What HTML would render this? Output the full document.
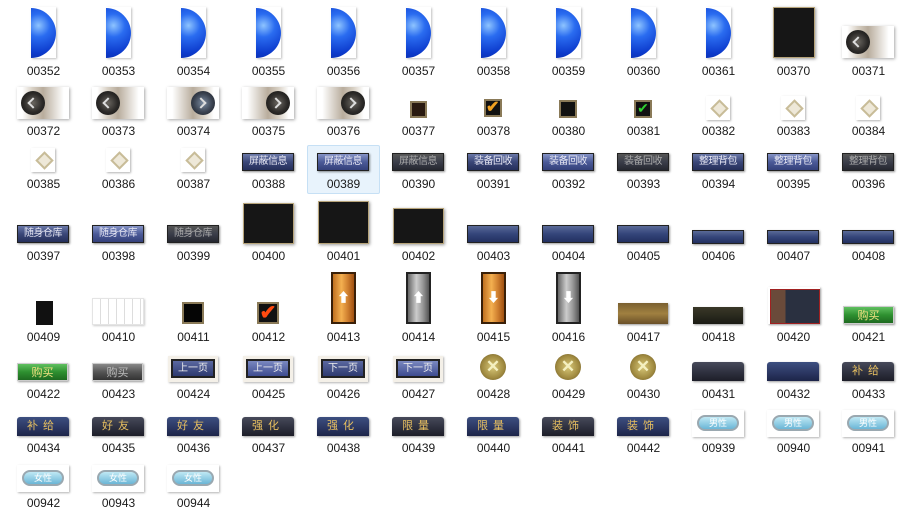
<!DOCTYPE html>
<html><head><meta charset="utf-8"><style>
body{margin:0;width:904px;height:514px;background:#fff;position:relative;overflow:hidden;font-family:"Liberation Sans","Noto Sans CJK SC",sans-serif}
.l{position:absolute;width:75px;text-align:center;font-size:12px;color:#1a1a1a;line-height:14px}
.i{position:absolute;box-sizing:border-box}
.sh{box-shadow:1px 1px 2px rgba(0,0,0,.4)}
.orb{width:25px;height:51px;top:7px;background:#fff;overflow:hidden;box-shadow:1px 1px 2px rgba(0,0,0,.25)}
.orb:before{content:"";position:absolute;left:-25px;top:1px;width:50px;height:50px;border-radius:50%;background:radial-gradient(circle at 65% 35%,#8ec4ff 0,#2a6cf0 25%,#0c3acc 60%,#061f86 100%)}
.th{width:52px;height:32px;background:#fff;box-shadow:1px 1px 3px rgba(0,0,0,.35)}
.th.sl{background:linear-gradient(90deg,#fff 10%,#d8d0c4 30%,#b8ac9c 50%,#fff 90%)}
.th.sr{background:linear-gradient(90deg,#fff 10%,#b8ac9c 50%,#d8d0c4 70%,#fff 90%)}
.ring{position:absolute;width:24px;height:24px;border-radius:50%;top:4px;background:radial-gradient(circle,#6a6660 0,#2c2a28 55%,#111 100%)}
.ring:after{content:"";position:absolute;left:8px;top:8px;width:6px;height:6px;border-left:2px solid #ddd;border-bottom:2px solid #ddd;transform:rotate(45deg)}
.ring.r:after{transform:rotate(-135deg);left:6px}
.btn{width:52px;height:18px;border:1px solid #222;background:linear-gradient(#6a78a8,#3a4678 50%,#252f5a);color:#e8e8f4;font-size:10px;line-height:16px;text-align:center;box-shadow:1px 1px 2px rgba(0,0,0,.45);letter-spacing:-0.5px}
.btn.b2{background:linear-gradient(#8593c6,#4b5a98 50%,#34407a)}
.btn.g{background:linear-gradient(#555,#3a3d4a 50%,#25272f);color:#aaa}
.bar{width:52px;height:18px;border:1px solid #222;background:linear-gradient(#5a6a98,#34457a 50%,#223060);box-shadow:1px 1px 2px rgba(0,0,0,.4)}
.frm{background:#161616;border:2px solid #b7a47a;box-shadow:1px 1px 3px rgba(0,0,0,.4)}
.dia{width:24px;height:24px;background:#fff;box-shadow:1px 1px 2px rgba(0,0,0,.3)}
.dia:after{content:"";position:absolute;left:7px;top:6px;width:9px;height:9px;border:2px solid #c8bc98;transform:rotate(45deg);background:#eee8d8}
.gb{width:52px;height:19px;border-radius:3px 3px 0 0;background:linear-gradient(#3d4f80,#2a3560 60%,#1c2448);color:#e8c060;font-size:11px;line-height:19px;text-align:center;letter-spacing:5px;box-shadow:1px 1px 2px rgba(0,0,0,.4)}
.gb.d{background:linear-gradient(#474a5a,#2c2e3c 60%,#1d1e28)}
.hex{width:52px;height:27px;background:#fff;box-shadow:1px 1px 2px rgba(0,0,0,.3)}
.hex:after{content:attr(data-t);position:absolute;left:5px;top:5px;width:42px;height:16px;border-radius:8px;background:linear-gradient(#bfe8f4,#6ab6d6);border:2px solid #9aa8b0;color:#fff;font-size:9px;line-height:13px;text-align:center;box-sizing:border-box}
.x{width:28px;height:28px;background:#fff}
.x:before{content:"";position:absolute;left:1px;top:1px;width:26px;height:26px;border-radius:50%;background:radial-gradient(circle,#d8c878,#a08a40 60%,#5a4a20)}
.x:after{content:"✕";position:absolute;left:0;top:0;width:28px;line-height:28px;text-align:center;color:#f4f0c0;font-size:17px;font-weight:bold}
.pg{width:50px;height:26px;background:#f4f0e8;box-shadow:1px 1px 2px rgba(0,0,0,.3)}
.pg span{position:absolute;left:3px;top:3px;width:44px;height:19px;border:2px solid #222;background:linear-gradient(#5a68a0,#2e3a70);color:#eee;font-size:10px;line-height:15px;text-align:center;box-sizing:border-box}
.cb{border:2px solid #8a7a58;background:#111}
</style></head><body>
<div class="i orb" style="left:31px"></div><div class="i orb" style="left:106px"></div><div class="i orb" style="left:181px"></div><div class="i orb" style="left:256px"></div><div class="i orb" style="left:331px"></div><div class="i orb" style="left:406px"></div><div class="i orb" style="left:481px"></div><div class="i orb" style="left:556px"></div><div class="i orb" style="left:631px"></div><div class="i orb" style="left:706px"></div>
<div class="i frm" style="left:773px;top:7px;width:42px;height:51px;border-width:1px"></div>
<div class="i th sl" style="left:842px;top:26px"><div class="ring" style="left:4px"></div></div>
<div class="l" style="left:6px;top:64px">00352</div><div class="l" style="left:81px;top:64px">00353</div><div class="l" style="left:156px;top:64px">00354</div><div class="l" style="left:231px;top:64px">00355</div><div class="l" style="left:306px;top:64px">00356</div><div class="l" style="left:381px;top:64px">00357</div><div class="l" style="left:456px;top:64px">00358</div><div class="l" style="left:531px;top:64px">00359</div><div class="l" style="left:606px;top:64px">00360</div><div class="l" style="left:681px;top:64px">00361</div><div class="l" style="left:756px;top:64px">00370</div><div class="l" style="left:831px;top:64px">00371</div>
<div class="i th sl" style="left:17px;top:87px"><div class="ring" style="left:4px"></div></div>
<div class="i th sl" style="left:92px;top:87px"><div class="ring" style="left:4px"></div></div>
<div class="i th sr" style="left:167px;top:87px"><div class="ring r" style="left:24px;background:radial-gradient(circle,#7a8aa0,#3a4250 55%,#15181e)"></div></div>
<div class="i th sr" style="left:242px;top:87px"><div class="ring r" style="left:24px"></div></div>
<div class="i th sr" style="left:317px;top:87px"><div class="ring r" style="left:24px"></div></div>
<div class="i cb" style="left:410px;top:101px;width:17px;height:17px;background:#2a1a10"></div>
<div class="i cb" style="left:484px;top:99px;width:18px;height:18px;color:#f0a020;font-size:16px;line-height:13px;font-weight:bold">✔</div>
<div class="i cb" style="left:559px;top:100px;width:18px;height:18px"></div>
<div class="i cb" style="left:634px;top:100px;width:18px;height:18px;color:#30d030;font-size:14px;line-height:13px;text-align:center">✔</div>
<div class="i dia" style="left:706px;top:96px"></div><div class="i dia" style="left:781px;top:96px"></div><div class="i dia" style="left:856px;top:96px"></div>
<div class="l" style="left:6px;top:124px">00372</div><div class="l" style="left:81px;top:124px">00373</div><div class="l" style="left:156px;top:124px">00374</div><div class="l" style="left:231px;top:124px">00375</div><div class="l" style="left:306px;top:124px">00376</div><div class="l" style="left:381px;top:124px">00377</div><div class="l" style="left:456px;top:124px">00378</div><div class="l" style="left:531px;top:124px">00380</div><div class="l" style="left:606px;top:124px">00381</div><div class="l" style="left:681px;top:124px">00382</div><div class="l" style="left:756px;top:124px">00383</div><div class="l" style="left:831px;top:124px">00384</div>
<div class="i" style="left:307px;top:145px;width:73px;height:49px;background:#e8f3fc;border:1px solid #c6e0f5;border-radius:2px"></div>
<div class="i dia" style="left:31px;top:148px"></div><div class="i dia" style="left:106px;top:148px"></div><div class="i dia" style="left:181px;top:148px"></div>
<div class="i btn" style="left:242px;top:153px">屏蔽信息</div><div class="i btn b2" style="left:317px;top:153px">屏蔽信息</div><div class="i btn g" style="left:392px;top:153px">屏蔽信息</div>
<div class="i btn" style="left:467px;top:153px">装备回收</div><div class="i btn b2" style="left:542px;top:153px">装备回收</div><div class="i btn g" style="left:617px;top:153px">装备回收</div>
<div class="i btn" style="left:692px;top:153px">整理背包</div><div class="i btn b2" style="left:767px;top:153px">整理背包</div><div class="i btn g" style="left:842px;top:153px">整理背包</div>
<div class="l" style="left:6px;top:177px">00385</div><div class="l" style="left:81px;top:177px">00386</div><div class="l" style="left:156px;top:177px">00387</div><div class="l" style="left:231px;top:177px">00388</div><div class="l" style="left:306px;top:177px">00389</div><div class="l" style="left:381px;top:177px">00390</div><div class="l" style="left:456px;top:177px">00391</div><div class="l" style="left:531px;top:177px">00392</div><div class="l" style="left:606px;top:177px">00393</div><div class="l" style="left:681px;top:177px">00394</div><div class="l" style="left:756px;top:177px">00395</div><div class="l" style="left:831px;top:177px">00396</div>
<div class="i btn" style="left:17px;top:225px">随身仓库</div><div class="i btn b2" style="left:92px;top:225px">随身仓库</div><div class="i btn g" style="left:167px;top:225px">随身仓库</div>
<div class="i frm" style="left:243px;top:203px;width:51px;height:41px;border-width:1px"></div><div class="i frm" style="left:318px;top:201px;width:51px;height:43px;border-width:1px"></div><div class="i frm" style="left:393px;top:208px;width:51px;height:36px;border-width:1px"></div>
<div class="i bar" style="left:467px;top:225px"></div><div class="i bar" style="left:542px;top:225px"></div><div class="i bar" style="left:617px;top:225px"></div>
<div class="i bar" style="left:692px;top:230px;height:14px"></div><div class="i bar" style="left:767px;top:230px;height:14px"></div><div class="i bar" style="left:842px;top:230px;height:14px"></div>
<div class="l" style="left:6px;top:249px">00397</div><div class="l" style="left:81px;top:249px">00398</div><div class="l" style="left:156px;top:249px">00399</div><div class="l" style="left:231px;top:249px">00400</div><div class="l" style="left:306px;top:249px">00401</div><div class="l" style="left:381px;top:249px">00402</div><div class="l" style="left:456px;top:249px">00403</div><div class="l" style="left:531px;top:249px">00404</div><div class="l" style="left:606px;top:249px">00405</div><div class="l" style="left:681px;top:249px">00406</div><div class="l" style="left:756px;top:249px">00407</div><div class="l" style="left:831px;top:249px">00408</div>
<div class="i" style="left:36px;top:301px;width:17px;height:24px;background:#111"></div>
<div class="i" style="left:92px;top:298px;width:52px;height:27px;background:repeating-linear-gradient(90deg,#fff 0 7px,#ddd 7px 8px);border:1px solid #e4e4e4;box-shadow:1px 1px 2px rgba(0,0,0,.2)"></div>
<div class="i cb" style="left:182px;top:302px;width:22px;height:22px;background:#050505"></div>
<div class="i cb" style="left:257px;top:302px;width:22px;height:22px;color:#ff4a10;font-size:20px;line-height:18px;text-align:center;font-weight:bold">✔</div>
<div class="i" style="left:331px;top:272px;width:25px;height:52px;border:2px solid #3a2008;background:linear-gradient(90deg,#c07020,#f4b050 40%,#d08030 70%,#a05010);color:#fff;text-align:center;font-size:13px;line-height:48px">⬆</div>
<div class="i" style="left:406px;top:272px;width:25px;height:52px;border:2px solid #222;background:linear-gradient(90deg,#666,#ccc 40%,#999 70%,#555);color:#fff;text-align:center;font-size:13px;line-height:48px">⬆</div>
<div class="i" style="left:481px;top:272px;width:25px;height:52px;border:2px solid #3a2008;background:linear-gradient(90deg,#c07020,#f4b050 40%,#d08030 70%,#a05010);color:#fff;text-align:center;font-size:13px;line-height:48px">⬇</div>
<div class="i" style="left:556px;top:272px;width:25px;height:52px;border:2px solid #222;background:linear-gradient(90deg,#666,#ccc 40%,#999 70%,#555);color:#fff;text-align:center;font-size:13px;line-height:48px">⬇</div>
<div class="i sh" style="left:618px;top:303px;width:50px;height:21px;background:linear-gradient(#7a6030,#a08040 50%,#6a5028)"></div>
<div class="i sh" style="left:693px;top:307px;width:50px;height:17px;background:linear-gradient(#3a3828,#2a2a1e 50%,#1a1a14)"></div>
<div class="i sh" style="left:768px;top:287px;width:52px;height:37px;background:#fff;padding:2px"><div style="width:100%;height:100%;background:linear-gradient(90deg,#6a4a3a 0 30%,#2a3040 30%);border:1px solid #a02020"></div></div>
<div class="i sh" style="left:843px;top:306px;width:51px;height:18px;background:linear-gradient(#60c060,#2e9030 50%,#1e6a20);color:#f0e080;font-size:11px;line-height:18px;text-align:center;border:1px solid #ccc">购买</div>
<div class="l" style="left:6px;top:330px">00409</div><div class="l" style="left:81px;top:330px">00410</div><div class="l" style="left:156px;top:330px">00411</div><div class="l" style="left:231px;top:330px">00412</div><div class="l" style="left:306px;top:330px">00413</div><div class="l" style="left:381px;top:330px">00414</div><div class="l" style="left:456px;top:330px">00415</div><div class="l" style="left:531px;top:330px">00416</div><div class="l" style="left:606px;top:330px">00417</div><div class="l" style="left:681px;top:330px">00418</div><div class="l" style="left:756px;top:330px">00420</div><div class="l" style="left:831px;top:330px">00421</div>
<div class="i sh" style="left:17px;top:363px;width:51px;height:18px;background:linear-gradient(#60c060,#2e9030 50%,#1e6a20);color:#f0e080;font-size:11px;line-height:18px;text-align:center;border:1px solid #ccc">购买</div>
<div class="i sh" style="left:92px;top:363px;width:51px;height:18px;background:linear-gradient(#888,#555 50%,#333);color:#bbb;font-size:11px;line-height:18px;text-align:center;border:1px solid #ccc">购买</div>
<div class="i pg" style="left:168px;top:356px"><span>上一页</span></div><div class="i pg" style="left:243px;top:356px"><span style="background:linear-gradient(#7a88c0,#3e4c90)">上一页</span></div>
<div class="i pg" style="left:318px;top:356px"><span>下一页</span></div><div class="i pg" style="left:393px;top:356px"><span style="background:linear-gradient(#7a88c0,#3e4c90)">下一页</span></div>
<div class="i x" style="left:479px;top:353px"></div><div class="i x" style="left:554px;top:353px"></div><div class="i x" style="left:629px;top:353px"></div>
<div class="i gb d" style="left:692px;top:362px"></div><div class="i gb" style="left:767px;top:362px"></div><div class="i gb d" style="left:842px;top:362px">补给</div>
<div class="l" style="left:6px;top:387px">00422</div><div class="l" style="left:81px;top:387px">00423</div><div class="l" style="left:156px;top:387px">00424</div><div class="l" style="left:231px;top:387px">00425</div><div class="l" style="left:306px;top:387px">00426</div><div class="l" style="left:381px;top:387px">00427</div><div class="l" style="left:456px;top:387px">00428</div><div class="l" style="left:531px;top:387px">00429</div><div class="l" style="left:606px;top:387px">00430</div><div class="l" style="left:681px;top:387px">00431</div><div class="l" style="left:756px;top:387px">00432</div><div class="l" style="left:831px;top:387px">00433</div>
<div class="i gb" style="left:17px;top:417px">补给</div><div class="i gb d" style="left:92px;top:417px">好友</div><div class="i gb" style="left:167px;top:417px">好友</div><div class="i gb d" style="left:242px;top:417px">强化</div><div class="i gb" style="left:317px;top:417px">强化</div><div class="i gb d" style="left:392px;top:417px">限量</div><div class="i gb" style="left:467px;top:417px">限量</div><div class="i gb d" style="left:542px;top:417px">装饰</div><div class="i gb" style="left:617px;top:417px">装饰</div>
<div class="i hex" data-t="男性" style="left:692px;top:410px"></div><div class="i hex" data-t="男性" style="left:767px;top:410px"></div><div class="i hex" data-t="男性" style="left:842px;top:410px"></div>
<div class="l" style="left:6px;top:441px">00434</div><div class="l" style="left:81px;top:441px">00435</div><div class="l" style="left:156px;top:441px">00436</div><div class="l" style="left:231px;top:441px">00437</div><div class="l" style="left:306px;top:441px">00438</div><div class="l" style="left:381px;top:441px">00439</div><div class="l" style="left:456px;top:441px">00440</div><div class="l" style="left:531px;top:441px">00441</div><div class="l" style="left:606px;top:441px">00442</div><div class="l" style="left:681px;top:441px">00939</div><div class="l" style="left:756px;top:441px">00940</div><div class="l" style="left:831px;top:441px">00941</div>
<div class="i hex" data-t="女性" style="left:17px;top:465px"></div><div class="i hex" data-t="女性" style="left:92px;top:465px"></div><div class="i hex" data-t="女性" style="left:167px;top:465px"></div>
<div class="l" style="left:6px;top:496px">00942</div><div class="l" style="left:81px;top:496px">00943</div><div class="l" style="left:156px;top:496px">00944</div>
</body></html>
